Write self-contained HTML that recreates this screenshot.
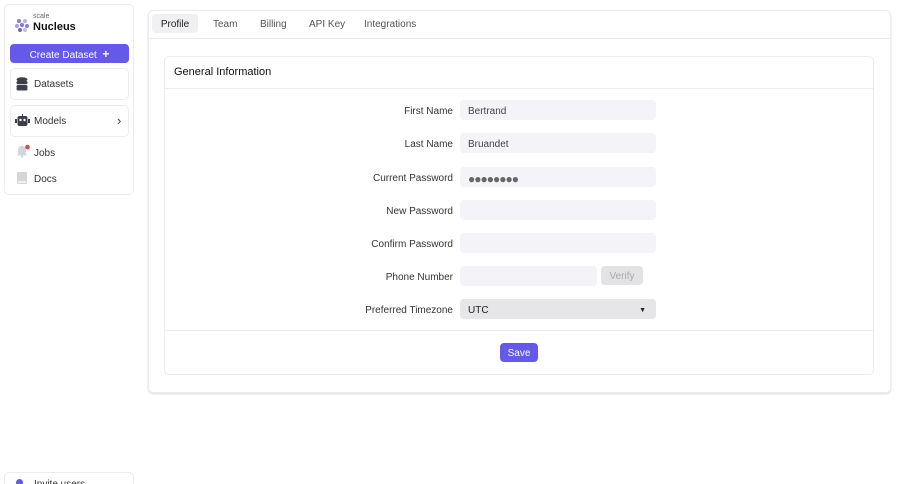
<!DOCTYPE html>
<html><head><meta charset="utf-8"><style>
*{box-sizing:border-box;margin:0;padding:0}
html{width:900px;height:484px;overflow:hidden}
body{width:900px;height:484px;background:#fff;font-family:"Liberation Sans",sans-serif;font-size:10px;color:#222;position:relative;overflow:hidden}
.card{position:absolute;border:1px solid #ececef;border-radius:5px;background:#fff}
.abs{position:absolute}
.lbl{position:absolute;right:447px;text-align:right;color:#333;font-size:10px;line-height:20px;padding-top:2px}
.inp{position:absolute;left:460px;width:196px;height:20px;background:#f4f4f8;border-radius:4px;padding-left:8px;padding-top:3px;line-height:18px;color:#444;font-size:10px}
.tab{position:absolute;top:14px;height:19px;line-height:17px;padding-top:2px;color:#555;font-size:10px}
.btn{position:absolute;border-radius:4px;text-align:center;line-height:17px;padding-top:2px;height:19px}
</style></head><body>
<div class="card" style="left:4px;top:4px;width:130px;height:191px"></div>
<svg class="abs" style="left:14px;top:17px" width="16" height="16" viewBox="0 0 16 16"><g fill="#8a7fd8"><circle cx="5" cy="4" r="2"/><circle cx="11" cy="4" r="2" fill="#b7b0ea"/><circle cx="3" cy="9" r="2" fill="#a59de2"/><circle cx="8" cy="8" r="2.2"/><circle cx="13" cy="9" r="2"/><circle cx="6" cy="13" r="2" fill="#6f63d0"/><circle cx="11" cy="13" r="2" fill="#c0bbef"/></g></svg>
<div class="abs" style="left:33px;top:13px;font-size:7px;color:#666">scale</div>
<div class="abs" style="left:33px;top:21px;font-size:11px;font-weight:bold;color:#111">Nucleus</div>
<div class="btn" style="left:10px;top:44px;width:119px;background:#6559ea;color:#fff;font-size:10px">Create Dataset &nbsp;<b style="font-size:12px">+</b></div>
<div class="card" style="left:10px;top:68px;width:119px;height:32px"></div>
<svg class="abs" style="left:16px;top:77px" width="12" height="14" viewBox="0 0 12 14"><g fill="#3c3f4a"><ellipse cx="6" cy="2.5" rx="5.5" ry="2.3"/><rect x=".5" y="4" width="11" height="3.2" rx="1.5"/><rect x=".5" y="8" width="11" height="3.2" rx="1.5"/><rect x=".5" y="10.5" width="11" height="3" rx="1.5"/></g></svg>
<div class="abs" style="left:34px;top:79px;color:#333">Datasets</div>
<div class="card" style="left:10px;top:105px;width:119px;height:32px"></div>
<svg class="abs" style="left:15px;top:114px" width="15" height="13" viewBox="0 0 15 13"><g fill="#3c3f4a"><rect x="2.5" y="2" width="10" height="10" rx="2"/><rect x="0" y="5" width="2" height="4"/><rect x="13" y="5" width="2" height="4"/><rect x="7" y="0" width="1" height="2"/></g><circle cx="5.5" cy="6" r="1.2" fill="#fff"/><circle cx="9.5" cy="6" r="1.2" fill="#fff"/></svg>
<div class="abs" style="left:34px;top:116px;color:#333">Models</div>
<div class="abs" style="left:117px;top:113px;color:#444;font-size:13px">›</div>
<svg class="abs" style="left:16px;top:144px" width="14" height="14" viewBox="0 0 14 14"><path d="M6 2c-3 0-4 2-4 5v3l-1 1.5h10l-1-1.5V7c0-3-1-5-4-5z" fill="#d4d6dc"/><circle cx="6" cy="12.5" r="1.2" fill="#d4d6dc"/><circle cx="11.5" cy="3" r="2.3" fill="#e04a3a"/></svg>
<div class="abs" style="left:34px;top:148px;color:#333">Jobs</div>
<svg class="abs" style="left:16px;top:171px" width="12" height="14" viewBox="0 0 12 14"><rect x="1" y="1" width="10" height="12" rx="1.5" fill="#d4d6dc"/><rect x="2" y="10" width="8" height="2" fill="#eee"/></svg>
<div class="abs" style="left:34px;top:174px;color:#333">Docs</div>
<div class="card" style="left:4px;top:472px;width:130px;height:30px"></div>
<div class="abs" style="left:16px;top:479px;width:7px;height:7px;border-radius:50%;background:#6559ea"></div>
<div class="abs" style="left:34px;top:479px;color:#333">Invite users</div>

<div class="card" style="left:148px;top:10px;width:743px;height:383px;box-shadow:0 1px 2px rgba(0,0,0,.15)"></div>
<div class="abs" style="left:148px;top:38px;width:743px;height:1px;background:#ececef"></div>
<div class="tab" style="left:152px;width:46px;background:#f0f0f2;border-radius:4px;text-align:center;color:#222">Profile</div>
<div class="tab" style="left:213px">Team</div>
<div class="tab" style="left:260px">Billing</div>
<div class="tab" style="left:309px">API Key</div>
<div class="tab" style="left:364px">Integrations</div>

<div class="card" style="left:164px;top:56px;width:710px;height:319px"></div>
<div class="abs" style="left:174px;top:66px;font-size:11px;color:#111">General Information</div>
<div class="abs" style="left:165px;top:88px;width:708px;height:1px;background:#ececef"></div>
<div class="abs" style="left:165px;top:330px;width:708px;height:1px;background:#ececef"></div>

<div class="lbl" style="top:100px">First Name</div><div class="inp" style="top:100px">Bertrand</div>
<div class="lbl" style="top:133px">Last Name</div><div class="inp" style="top:133px">Bruandet</div>
<div class="lbl" style="top:167px">Current Password</div><div class="inp" style="top:167px;font-size:12px;letter-spacing:-1px;color:#666">●●●●●●●●</div>
<div class="lbl" style="top:200px">New Password</div><div class="inp" style="top:200px"></div>
<div class="lbl" style="top:233px">Confirm Password</div><div class="inp" style="top:233px"></div>
<div class="lbl" style="top:266px">Phone Number</div><div class="inp" style="top:266px;width:137px"></div>
<div class="btn" style="left:601px;top:266px;width:42px;background:#e3e3e6;color:#aaa">Verify</div>
<div class="lbl" style="top:299px">Preferred Timezone</div><div class="inp" style="top:299px;background:#e6e6e9;color:#222">UTC<span style="position:absolute;right:10px;font-size:7px">▼</span></div>
<div class="btn" style="left:500px;top:343px;width:38px;background:#6559ea;color:#fff">Save</div>
</body></html>
